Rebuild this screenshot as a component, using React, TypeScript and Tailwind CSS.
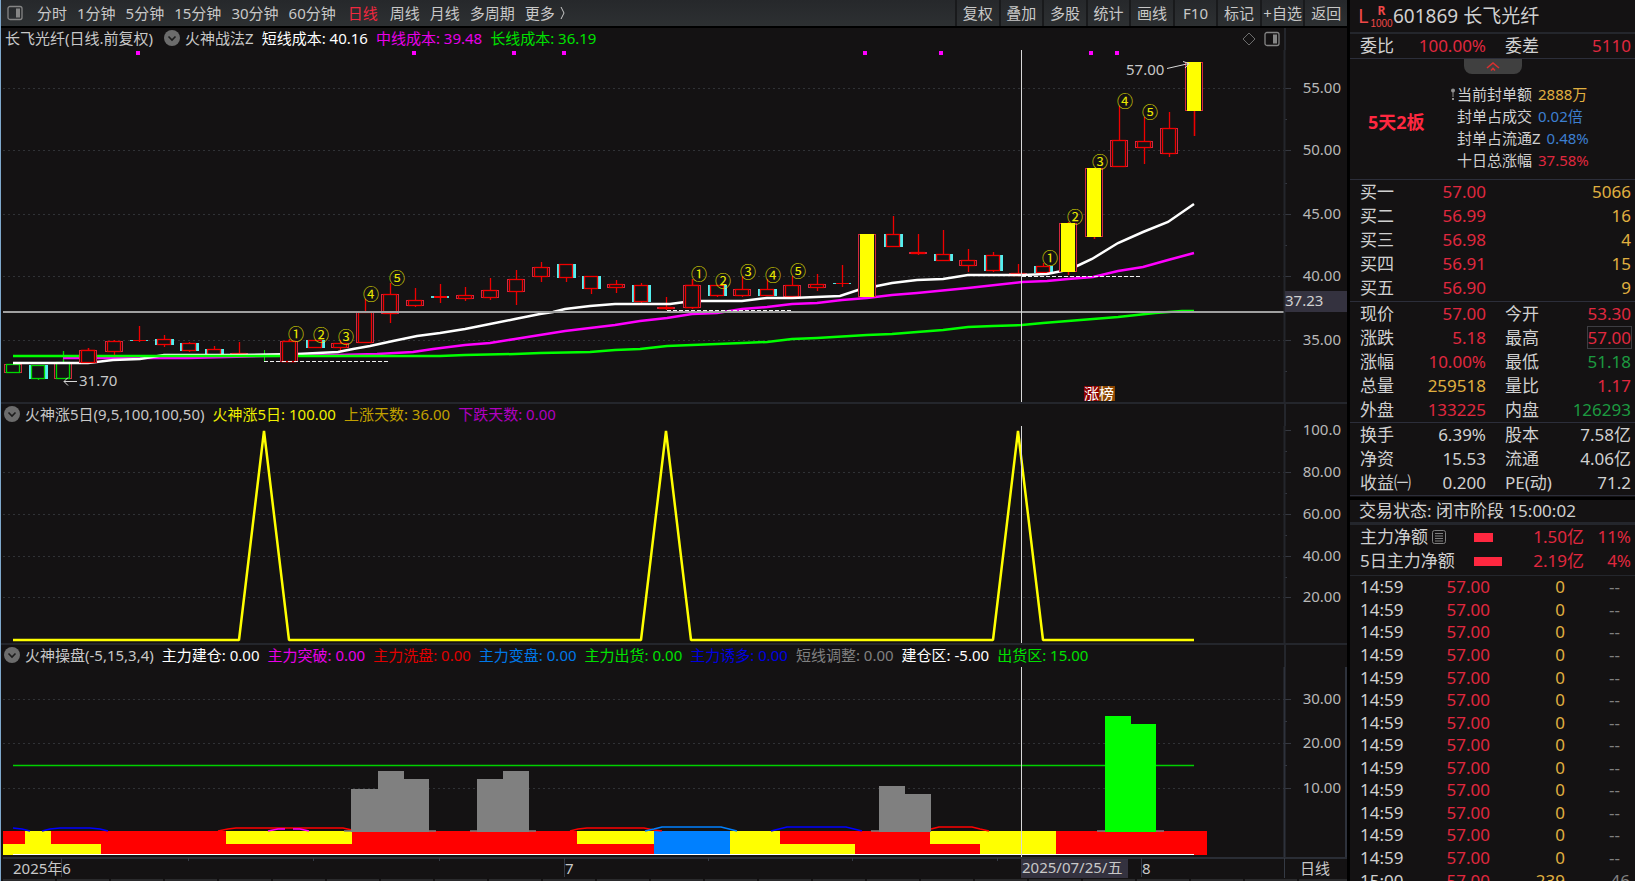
import { ReactNode } from "react";

type Candle = [kind: string, high: number, top: number, bottom: number, low: number];

// kind: u = rising, d = falling, g / G = green marked, y = limit up, t = thin, w = wick only
const candles: Candle[] = [
  ["g", 364, 364, 372, 372],
  ["G", 365, 365, 378, 380],
  ["g", 351, 362, 378, 378],
  ["u", 348, 350, 362, 362],
  ["u", 340, 341, 351, 358],
  ["t", 326, 340, 341, 342],
  ["d", 335, 339, 344, 347],
  ["d", 342, 343, 350, 352],
  ["d", 346, 349, 355, 355],
  ["u", 342, 353, 356, 357],
  ["w", 350, 355, 356, 362],
  ["u", 339, 341, 361, 361],
  ["d", 340, 340, 347, 348],
  ["u", 340, 343, 347, 351],
  ["u", 299, 312, 342, 342],
  ["u", 283, 294, 313, 323],
  ["u", 288, 300, 305, 307],
  ["t", 284, 296, 298, 303],
  ["u", 287, 295, 298, 301],
  ["u", 278, 290, 297, 300],
  ["u", 270, 279, 291, 305],
  ["u", 262, 267, 276, 282],
  ["d", 264, 264, 277, 282],
  ["d", 276, 276, 288, 294],
  ["u", 280, 284, 287, 293],
  ["d", 283, 285, 301, 303],
  ["u", 297, 307, 308, 310],
  ["u", 279, 285, 307, 309],
  ["d", 285, 285, 295, 297],
  ["u", 276, 289, 295, 297],
  ["d", 279, 289, 295, 295],
  ["u", 276, 285, 296, 299],
  ["u", 274, 284, 287, 291],
  ["t", 265, 283, 284, 287],
  ["y", 234, 234, 296, 296],
  ["d", 216, 234, 246, 247],
  ["u", 234, 252, 253, 255],
  ["d", 230, 254, 260, 260],
  ["u", 249, 260, 265, 272],
  ["d", 252, 255, 270, 272],
  ["u", 264, 273, 275, 276],
  ["d", 263, 266, 272, 275],
  ["y", 222, 223, 271, 275],
  ["y", 168, 168, 236, 239],
  ["u", 106, 140, 166, 166],
  ["u", 117, 141, 147, 164],
  ["u", 112, 128, 153, 157],
  ["y", 62, 62, 110, 136],
];

const shortCost =
  "13,363 88,363 113,360 140,359 164,355 233,355 297,354 338,352 353,349 370,346 393,341 417,336 440,333 465,329 490,324 515,319 540,314 553,312 565,309 590,306 615,304 670,304 685,302 698,301 742,301 767,298 792,298 840,296 858,290 877,286 892,283 917,280 943,279 968,275 1022,275 1047,274 1062,271 1077,266 1092,259 1118,243 1143,232 1168,222 1194,204";
const midCost =
  "63,358 188,358 263,356 338,355 377,354 413,352 433,349 465,345 490,343 515,339 540,335 565,331 590,328 615,325 640,321 667,318 692,314 717,313 742,309 767,307 792,304 817,303 842,300 867,298 892,295 917,293 968,288 1022,282 1047,281 1068,279 1093,277 1118,271 1143,267 1168,260 1194,253";
const longCost =
  "13,356 440,356 465,355 515,354 540,353 590,352 615,350 640,349 667,346 692,345 742,343 767,342 792,339 817,338 867,335 892,334 917,332 943,330 968,327 993,326 1022,325 1043,323 1068,321 1093,319 1118,317 1155,313 1182,311 1194,311";

const marks: [string, number, number][] = [
  ["①", 296, 334],
  ["②", 321, 335],
  ["③", 346, 337],
  ["④", 371, 294],
  ["⑤", 397, 278],
  ["①", 699, 274],
  ["②", 723, 281],
  ["③", 748, 272],
  ["④", 773, 275],
  ["⑤", 798, 271],
  ["①", 1050, 258],
  ["②", 1075, 217],
  ["③", 1100, 162],
  ["④", 1125, 101],
  ["⑤", 1150, 112],
];

const signals = [138, 414, 514, 564, 865, 941, 1091, 1117];

// [x, width, color]
const upperBand: [number, number, string][] = [
  [3, 22, "#ff0000"],
  [25, 26, "#ffff00"],
  [51, 175, "#ff0000"],
  [226, 126, "#ffff00"],
  [352, 225, "#ff0000"],
  [577, 77, "#ffff00"],
  [654, 76, "#0080ff"],
  [730, 50, "#ffff00"],
  [780, 150, "#ff0000"],
  [930, 126, "#ffff00"],
  [1056, 151, "#ff0000"],
];
const lowerBand: [number, number, string][] = [
  [3, 98, "#ffff00"],
  [101, 553, "#ff0000"],
  [654, 76, "#0080ff"],
  [730, 125, "#ffff00"],
  [855, 125, "#ff0000"],
  [980, 76, "#ffff00"],
  [1056, 151, "#ff0000"],
];
// [x, width, top, color]
const bars: [number, number, number, string][] = [
  [351, 27, 789, "#808080"],
  [378, 26, 771, "#808080"],
  [404, 25, 779, "#808080"],
  [477, 26, 779, "#808080"],
  [503, 26, 771, "#808080"],
  [879, 26, 786, "#808080"],
  [905, 26, 794, "#808080"],
  [1105, 26, 716, "#00ff00"],
  [1131, 25, 724, "#00ff00"],
];
const ripples: [string, string][] = [
  ["#0000ff", "13,828 22,829 30,831"],
  ["#0000ff", "42,831 50,829 60,828 90,828 100,829 108,831"],
  ["#ff0000", "218,831 228,829 236,828 343,828 352,830"],
  ["#ff00ff", "268,831 278,829 285,829"],
  ["#ff00ff", "293,829 300,829 309,831"],
  ["#808080", "344,831 352,831"],
  ["#808080", "428,831 436,831"],
  ["#808080", "470,831 478,831"],
  ["#808080", "528,831 536,831"],
  ["#ff0000", "570,831 578,829 587,828 644,828 654,830 662,831"],
  ["#0080ff", "645,831 654,829 662,827 721,827 729,829 737,831"],
  ["#0000ff", "771,831 779,829 787,827 846,827 854,829 862,831"],
  ["#808080", "871,831 879,831"],
  ["#ff0000", "931,829 939,827 972,827 980,829 989,831"],
  ["#808080", "1097,831 1105,831"],
  ["#808080", "1156,831 1164,831"],
];

const periods = [
  "分时",
  "1分钟",
  "5分钟",
  "15分钟",
  "30分钟",
  "60分钟",
  "日线",
  "周线",
  "月线",
  "多周期",
];
const tools = ["复权", "叠加", "多股", "统计", "画线", "F10", "标记", "+自选", "返回"];

const red = "text-[#e0283f]";
const green = "text-[#1c9a40]";
const amber = "text-[#e0b040]";
const plain = "text-[#d0d0d0]";
const blue = "text-[#3d7fd0]";

const bids = [
  ["买一", "57.00", "5066"],
  ["买二", "56.99", "16"],
  ["买三", "56.98", "4"],
  ["买四", "56.91", "15"],
  ["买五", "56.90", "9"],
];

const quotes = [
  ["现价", "57.00", red, "今开", "53.30", red],
  ["涨跌", "5.18", red, "最高", "57.00", red],
  ["涨幅", "10.00%", red, "最低", "51.18", green],
  ["总量", "259518", amber, "量比", "1.17", red],
  ["外盘", "133225", red, "内盘", "126293", green],
];

const basics = [
  ["换手", "6.39%", plain, "股本", "7.58亿", plain],
  ["净资", "15.53", plain, "流通", "4.06亿", plain],
  ["收益㈠", "0.200", plain, "PE(动)", "71.2", plain],
];

const seals = [
  ["当前封单额", "2888万", amber],
  ["封单占成交", "0.02倍", blue],
  ["封单占流通Z", "0.48%", blue],
  ["十日总涨幅", "37.58%", red],
];

const ticks = [
  ...Array.from({ length: 13 }, () => ["14:59", "57.00", "0", "--"]),
  ["15:00", "57.00", "239", "46"],
];

export default function App() {
  return (
    <div className="flex h-screen overflow-hidden bg-[#141213] font-['Noto_Sans','Noto_Sans_CJK_SC',sans-serif] text-[15px] text-[#c8c8c8]">
      <main className="min-w-0 flex-1 border-l border-r-3 border-l-[#7fa8cc] border-r-black">
        <Toolbar />
        <PriceChart />
        <RiseChart />
        <FlowChart />
        <TimeAxis />
      </main>
      <Sidebar />
    </div>
  );
}

const Toolbar = () => {
  return (
    <nav className="flex h-7 justify-between whitespace-nowrap border-b-2 border-black bg-linear-to-b from-[#26282b] to-[#2d3032] leading-[26px]">
      <div className="flex items-center gap-[10px] pl-[6px]">
        <button aria-label="侧栏" className="mr-1">
          <PanelIcon />
        </button>
        {periods.map((name) => (
          <button key={name} className={name === "日线" ? "px-[2px] text-[#f0283f]" : ""}>
            {name}
          </button>
        ))}
        <button className="flex items-center gap-1">
          更多
          <svg width="8" height="16" viewBox="0 0 8 16" fill="none" stroke="#c8c8c8">
            <path d="M2 2 L5 8 L2 14" />
          </svg>
        </button>
      </div>
      <div className="grid w-[392px] grid-cols-9">
        {tools.map((name) => (
          <button key={name} className="border-l-2 border-[#191a1c] text-center">
            {name}
          </button>
        ))}
      </div>
    </nav>
  );
};

const PanelIcon = () => {
  return (
    <svg width="16" height="16" viewBox="0 0 16 16" fill="none">
      <rect x="1" y="1.5" width="14" height="13" rx="2" stroke="#858585" strokeWidth="1.3" />
      <rect x="9" y="3.5" width="4" height="9" fill="#858585" />
    </svg>
  );
};

const ChartHeader = ({ children, right }: { children: ReactNode; right?: ReactNode }) => {
  return (
    <div className="flex h-[22px] whitespace-nowrap leading-[18px]">
      <div className="flex min-w-0 flex-1 items-center gap-2 pb-[3px] pl-[3px]">{children}</div>
      {right}
      <div className="w-[63px] border-l-2 border-[#24262c]" />
    </div>
  );
};

const Collapse = () => {
  return (
    <button aria-label="折叠" className="-mr-[3px]">
      <svg width="16" height="16" viewBox="0 0 16 16" fill="none">
        <circle cx="8" cy="8" r="8" fill="#6c6c6c" />
        <path d="M4.5 6.5 L8 10 L11.5 6.5" stroke="#1c1c1c" strokeWidth="1.6" />
      </svg>
    </button>
  );
};

const Grid = ({
  rows,
  minor,
}: {
  rows: [string, number][];
  minor: number[];
}) => {
  return (
    <g>
      {rows.map(([label, y]) => (
        <g key={label}>
          {label !== "100.0" && (
            <path d={`M3 ${y + 0.5} H1284`} stroke="#303236" strokeDasharray="2 3" />
          )}
          <path d={`M1284 ${y + 0.5} H1291`} stroke="#353840" />
          <text x="1341" y={y + 5} textAnchor="end" fill="#b8b8b8">
            {label}
          </text>
        </g>
      ))}
      {minor.map((y) => (
        <path key={y} d={`M1284 ${y + 0.5} H1287`} stroke="#353840" />
      ))}
    </g>
  );
};

const CandleShape = ({ candle, x }: { candle: Candle; x: number }) => {
  const [kind, high, top, bottom, low] = candle;
  const h = Math.max(bottom - top, 1);
  const inner = kind === "g" || kind === "G" || kind === "w" ? "#00d800" : "#ee0000";
  const outer = kind === "d" || kind === "G" ? "#54f0f0" : "#d22840";
  if (kind === "w") {
    return <path d={`M${x + 0.5} ${high} V${low}`} stroke={inner} />;
  }
  return (
    <g>
      <path d={`M${x + 0.5} ${high} V${top} M${x + 0.5} ${bottom} V${low}`} stroke={inner} strokeWidth="1.3" />
      {kind === "t" && <rect x={x - 9} y={top} width="18" height={h} fill="#54d8d8" />}
      {kind === "t" && <rect x={x - 6} y={top} width="13" height={h} fill="#ee0000" />}
      {kind === "u" || kind === "g" || kind === "y" ? (
        <rect x={x - 8.5} y={top + 0.5} width="17" height={h} fill="#141213" stroke={outer} />
      ) : null}
      {(kind === "d" || kind === "G") && <rect x={x - 9} y={top} width="19" height={h + 1} fill={outer} />}
      {kind === "y" && <rect x={x - 7} y={top} width="14" height={h + 1} fill="#ffff00" />}
      {kind !== "y" && kind !== "t" && (
        <rect x={x - 6.5} y={top + 0.5} width="13" height={h} fill="#141213" stroke={inner} strokeWidth="1.3" />
      )}
    </g>
  );
};

const PriceChart = () => {
  return (
    <section className="border-b-2 border-[#24262c]">
      <ChartHeader
        right={
          <div className="flex items-center gap-2 pr-1">
            <svg width="14" height="16" viewBox="0 0 14 16" fill="none" stroke="#6c6c6c">
              <path d="M7 2 L13 8 L7 14 L1 8 Z" />
            </svg>
            <button aria-label="面板">
              <PanelIcon />
            </button>
          </div>
        }
      >
        <span className="pl-px pr-[3px]">长飞光纤(日线.前复权)</span>
        <Collapse />
        <span>火神战法Z</span>
        <span className="text-white">短线成本: 40.16</span>
        <span className="text-[#e800e8]">中线成本: 39.48</span>
        <span className="text-[#00e000]">长线成本: 36.19</span>
      </ChartHeader>
      <svg viewBox="1 50 1346 352" className="block h-auto w-full text-[15px]">
        <Grid
          rows={[
            ["55.00", 88],
            ["50.00", 150],
            ["45.00", 214],
            ["40.00", 276],
            ["35.00", 340],
          ]}
          minor={[119, 183, 245, 309, 371]}
        />
        {signals.map((x) => (
          <rect key={x} x={x - 2} y="51" width="4" height="4" fill="#ff00ff" />
        ))}
        {candles.map((candle, i) => (
          <CandleShape key={i} candle={candle} x={Math.round(13 + i * 25.13)} />
        ))}
        <g fill="none" strokeWidth="2.5">
          <polyline points={midCost} stroke="#ff00ff" />
          <polyline points={shortCost} stroke="#ffffff" />
          <polyline points={longCost} stroke="#00ff00" />
        </g>
        {/* limit-up bodies stay above the cost lines */}
        {candles.map((candle, i) =>
          candle[0] === "y" ? (
            <CandleShape key={i} candle={candle} x={Math.round(13 + i * 25.13)} />
          ) : null
        )}
        <CandleShape candle={candles[3]} x={88} />
        <CandleShape candle={candles[11]} x={289} />
        <CandleShape candle={candles[27]} x={692} />
        <path
          d="M264 361.5 H389 M667 310.5 H791 M1022 276.5 H1142"
          stroke="#f0f0f0"
          strokeDasharray="4 2"
        />
        <path d="M3 312 H1284" stroke="#a0a0a0" strokeWidth="2" />
        <path d="M1021.5 50 V402" stroke="#d8d8d8" />
        <g fill="#e8e800" fontSize="16" textAnchor="middle">
          {marks.map(([mark, x, y]) => (
            <text key={x} x={x} y={y + 6} fontFamily="Noto Sans CJK SC">
              {mark}
            </text>
          ))}
        </g>
        <g stroke="#d8d8d8" fill="none">
          <path d="M1167 68.5 L1189 63.5 M1183 61.5 L1189 63.5 L1185 68" />
          <path d="M64 381.5 H77 M68 377.5 L64 381.5 L68 385.5" />
        </g>
        <text x="1126" y="75" fill="#c8c8c8">
          57.00
        </text>
        <text x="79" y="386" fill="#c8c8c8">
          31.70
        </text>
        <rect x="1084" y="386" width="15" height="15" fill="#8b0000" />
        <rect x="1099" y="386" width="16" height="15" fill="#8b4500" />
        <text x="1084" y="399" fill="#ffffff">
          涨榜
        </text>
        <path d="M1284.5 50 V402" stroke="#24262c" strokeWidth="2" />
        <rect x="1285" y="291" width="62" height="21" fill="#34323f" />
        <text x="1285" y="306" fill="#d0d0d0">
          37.23
        </text>
      </svg>
    </section>
  );
};

const RiseChart = () => {
  return (
    <section className="border-b-2 border-[#24262c]">
      <ChartHeader>
        <Collapse />
        <span>火神涨5日(9,5,100,100,50)</span>
        <span className="text-[#f0f000]">火神涨5日: 100.00</span>
        <span className="text-[#c0a000]">上涨天数: 36.00</span>
        <span className="text-[#b000c0]">下跌天数: 0.00</span>
      </ChartHeader>
      <svg viewBox="1 426 1346 217" className="block h-auto w-full overflow-visible text-[15px]">
        <Grid
          rows={[
            ["100.0", 430],
            ["80.00", 472],
            ["60.00", 514],
            ["40.00", 556],
            ["20.00", 597],
          ]}
          minor={[451, 493, 535, 577]}
        />
        <polyline
          points="13,640 239,640 264,431 289,640 641,640 666,431 691,640 993,640 1018,431 1043,640 1194,640"
          fill="none"
          stroke="#ffff00"
          strokeWidth="2.5"
          strokeLinejoin="bevel"
        />
        <path d="M1021.5 426 V643" stroke="#d8d8d8" />
        <path d="M1284.5 426 V643" stroke="#24262c" strokeWidth="2" />
      </svg>
    </section>
  );
};

const FlowChart = () => {
  return (
    <section>
      <ChartHeader>
        <Collapse />
        <span>火神操盘(-5,15,3,4)</span>
        <span className="text-white">主力建仓: 0.00</span>
        <span className="text-[#e800e8]">主力突破: 0.00</span>
        <span className="text-[#e00000]">主力洗盘: 0.00</span>
        <span className="text-[#0078e8]">主力变盘: 0.00</span>
        <span className="text-[#00e000]">主力出货: 0.00</span>
        <span className="text-[#0000e0]">主力诱多: 0.00</span>
        <span className="text-[#808080]">短线调整: 0.00</span>
        <span className="text-white">建仓区: -5.00</span>
        <span className="text-[#00e000]">出货区: 15.00</span>
      </ChartHeader>
      <svg viewBox="1 667 1346 190" className="block h-auto w-full text-[15px]">
        <Grid
          rows={[
            ["30.00", 699],
            ["20.00", 743],
            ["10.00", 788],
          ]}
          minor={[721, 765]}
        />
        {upperBand.map(([x, w, color]) => (
          <rect key={x} x={x} y="831" width={w} height="13" fill={color} />
        ))}
        {lowerBand.map(([x, w, color]) => (
          <rect key={x} x={x} y="844" width={w} height="11" fill={color} />
        ))}
        {ripples.map(([color, points]) => (
          <polyline key={points} points={points} fill="none" stroke={color} strokeWidth="1.5" />
        ))}
        <path d="M13 765.5 H1194" stroke="#00d000" strokeWidth="1.5" />
        {bars.map(([x, w, top, color]) => (
          <rect key={x} x={x} y={top} width={w} height={832 - top} fill={color} />
        ))}
        <path d="M13 854.5 H1194" stroke="#ffffff" />
        <path d="M1021.5 667 V857" stroke="#d8d8d8" />
        <path d="M1284.5 667 V857 M1346 667 V857" stroke="#2e323c" strokeWidth="2" />
      </svg>
    </section>
  );
};

const TimeAxis = () => {
  return (
    <svg viewBox="1 857 1346 24" className="block h-auto w-full text-[15px]">
      <path d="M3 858 H1347" stroke="#2a2d35" strokeWidth="2" />
      <path
        d="M61.5 858 V877 M188.5 858 V861 M313.5 858 V861 M439.5 858 V861 M564.5 858 V877 M708.5 858 V861 M852.5 858 V861 M997.5 858 V861 M1141.5 858 V877 M1284.5 858 V878"
        stroke="#353a44"
      />
      <rect x="1021" y="859" width="107" height="19" fill="#34323f" />
      <g fill="#c8c8c8">
        <text x="13" y="874">
          2025年6
        </text>
        <text x="565" y="874">
          7
        </text>
        <text x="1022" y="873">
          2025/07/25/五
        </text>
        <text x="1142" y="874">
          8
        </text>
        <text x="1300" y="874">
          日线
        </text>
      </g>
      <path d="M3 880 H1347" stroke="#2a2a2c" strokeWidth="2" strokeDasharray="52 2" />
    </svg>
  );
};

const Sidebar = () => {
  return (
    <aside className="w-[285px] shrink-0 whitespace-nowrap text-[17px]">
      <h1 className="flex h-[34px] items-center border-b-2 border-[#24262c] pl-2 text-[19px] text-[#d0d0d0]">
        <span className="w-3 text-[20px] text-[#f04848]">L</span>
        <span className="flex w-[23px] flex-col items-center pt-px text-[#f04848]">
          <b className="text-[12px] leading-[15px]">R</b>
          <span className="font-['Liberation_Sans'] text-[10px] leading-[12px]">1000</span>
        </span>
        601869 长飞光纤
      </h1>
      <QuoteTable rows={[["委比", "100.00%", red, "委差", "5110", red]]} />
      <div className="flex flex-col items-center border-b border-[#2c2e3a] pb-2">
        <button
          aria-label="收起"
          className="flex h-[15px] w-[58px] items-center justify-center rounded-b-lg bg-[#404040]"
        >
          <svg width="14" height="10" viewBox="0 0 14 10" fill="none" stroke="#d83030" strokeWidth="1.6">
            <path d="M1 6 L7 1 L13 6 M5 8.5 L7 6.5 L9 8.5" />
          </svg>
        </button>
        <div className="flex w-full items-center pt-[9px]">
          <strong className="w-[101px] pb-[10px] pl-[18px] text-[18px] text-[#ff2840]">5天2板</strong>
          <dl className="text-[15px]">
            {seals.map(([label, value, color], i) => (
              <div key={label} className="flex h-[22px] items-center">
                <span className="w-[6px]">
                  {i === 0 && (
                    <svg width="4" height="12" viewBox="0 0 4 12" fill="#909090">
                      <circle cx="2" cy="2.5" r="2" />
                      <path d="M1.5 4 H2.5 V9 H1.5 Z M1 10 H3 V12 H1 Z" />
                    </svg>
                  )}
                </span>
                <dt className="text-[#d0d0d0]">{label}</dt>
                <dd className={`pl-[6px] ${color}`}>{value}</dd>
              </div>
            ))}
          </dl>
        </div>
      </div>
      <table className="w-full table-fixed border-separate border-spacing-0 border-b border-[#2c2e3a] pb-px">
        <colgroup>
          <col className="w-[65px]" />
          <col className="w-[71px]" />
          <col />
        </colgroup>
        <tbody>
          {bids.map(([label, price, volume]) => (
            <tr key={label} className="h-6 leading-6">
              <Label>{label}</Label>
              <td className={`text-right ${red}`}>{price}</td>
              <td className={`pr-1 text-right ${amber}`}>{volume}</td>
            </tr>
          ))}
        </tbody>
      </table>
      <QuoteTable rows={quotes} />
      <QuoteTable rows={basics} />
      <p className="mt-px h-[28px] border-y-3 border-t-black border-b-[#24262c] pl-[9px] leading-[22px] text-[#d0d0d0]">
        交易状态: 闭市阶段 15:00:02
      </p>
      <table className="w-full table-fixed border-separate border-spacing-0 border-b border-[#24262c] pb-[2px]">
        <colgroup>
          <col className="w-[124px]" />
          <col className="w-10" />
          <col className="w-[70px]" />
          <col />
        </colgroup>
        <tbody>
          <tr className="h-6 leading-6">
            <Label>
              <span className="flex items-center gap-[3px]">
                主力净额
                <svg width="16" height="16" viewBox="0 0 16 16" fill="none" stroke="#808080">
                  <rect x="1.5" y="1.5" width="13" height="13" rx="2" />
                  <path d="M4 4.5 H12 M4 7 H12 M4 9.5 H12 M4 12 H12" />
                </svg>
              </span>
            </Label>
            <td>
              <div className="h-[9px] w-[19px] bg-[#ff2840]" />
            </td>
            <td className={`text-right ${red}`}>1.50亿</td>
            <td className={`pr-1 text-right ${red}`}>11%</td>
          </tr>
          <tr className="h-6 leading-6">
            <Label>5日主力净额</Label>
            <td>
              <div className="h-[9px] w-7 bg-[#ff2840]" />
            </td>
            <td className={`text-right ${red}`}>2.19亿</td>
            <td className={`pr-1 text-right ${red}`}>4%</td>
          </tr>
        </tbody>
      </table>
      <table className="h-[316px] w-full table-fixed leading-[22px]">
        <colgroup>
          <col className="w-[65px]" />
          <col className="w-[75px]" />
          <col className="w-[75px]" />
          <col />
        </colgroup>
        <tbody>
          {ticks.map(([time, price, volume, count], i) => (
            <tr key={i}>
              <td className="pl-[10px] text-[#d0d0d0]">{time}</td>
              <td className={`text-right ${red}`}>{price}</td>
              <td className={`text-right ${amber}`}>{volume}</td>
              <td className={`text-right text-[#808080] ${count === "--" ? "pr-[15px]" : "pr-[5px]"}`}>
                {count}
              </td>
            </tr>
          ))}
        </tbody>
      </table>
    </aside>
  );
};

const Label = ({ children }: { children: ReactNode }) => {
  return (
    <th scope="row" className="pl-[10px] text-left font-normal text-[#d0d0d0]">
      {children}
    </th>
  );
};

const QuoteTable = ({ rows }: { rows: string[][] }) => {
  return (
    <table className="w-full table-fixed border-b border-[#2c2e3a]">
      <colgroup>
        <col className="w-[65px]" />
        <col className="w-[71px]" />
        <col className="w-[70px]" />
        <col />
      </colgroup>
      <tbody>
        {rows.map(([label, value, color, label2, value2, color2]) => (
          <tr key={label} className="h-6 leading-6">
            <Label>{label}</Label>
            <td className={`text-right ${color}`}>{value}</td>
            <th scope="row" className="pl-[19px] text-left font-normal text-[#d0d0d0]">
              {label2}
            </th>
            <td className={`pr-1 text-right ${color2}`}>
              {label2 === "最高" ? (
                <span className="inline-block leading-[21px] outline outline-[#3d3d42]">{value2}</span>
              ) : (
                value2
              )}
            </td>
          </tr>
        ))}
      </tbody>
    </table>
  );
};
